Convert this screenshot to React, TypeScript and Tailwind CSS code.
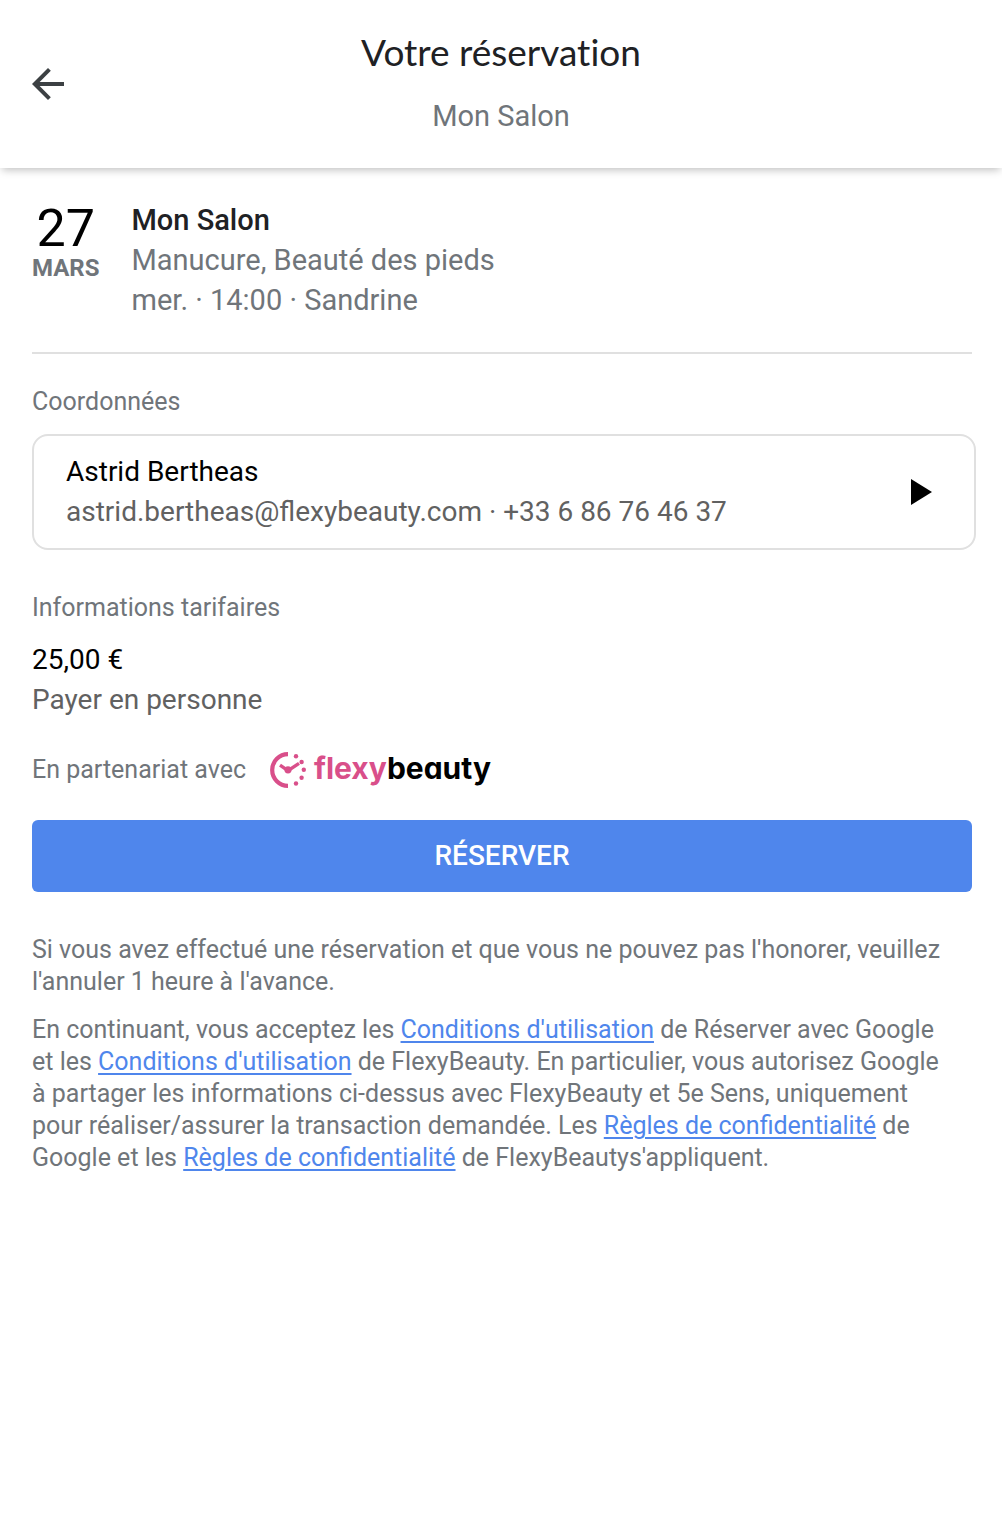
import React from 'react';

interface TextLinkProps {
  href: string;
  children: React.ReactNode;
}

const TextLink = ({ href, children }: TextLinkProps) => (
  <a href={href} className="text-[#4f86ec] underline decoration-2 underline-offset-3">
    {children}
  </a>
);

const FlexyBeautyLogo = () => (
  <div className="flex items-center gap-2">
    <svg width="36" height="36" viewBox="0 0 36 36" fill="none" aria-hidden="true">
      <path d="M18 2.2A15.8 15.8 0 0 0 18 33.8" stroke="#d94f8a" strokeWidth="4.2" />
      <path d="M10 13.2l8 5.4L29 11.4" stroke="#d94f8a" strokeWidth="3.4" />
      <circle cx="18" cy="17.8" r="3.6" fill="#d94f8a" />
      <circle cx="26" cy="4.2" r="2.2" fill="#d94f8a" />
      <circle cx="31.6" cy="10" r="2.2" fill="#d94f8a" />
      <circle cx="33.8" cy="17.8" r="2.2" fill="#d94f8a" />
      <circle cx="31.6" cy="25.8" r="2.2" fill="#d94f8a" />
      <circle cx="26" cy="31.5" r="2.2" fill="#d94f8a" />
    </svg>
    <span className="pb-1 font-['Inter',sans-serif] text-[30px] leading-8 font-bold text-black [font-feature-settings:'cv11']">
      <span className="text-[#d94f8a]">flexy</span>beauty
    </span>
  </div>
);

const App = () => {
  return (
    <div className="min-h-screen bg-white font-['Roboto',sans-serif] text-[#70757a]">
      <header className="flex h-[168px] items-center px-8 shadow-[0_4px_8px_-2px_rgba(0,0,0,0.25)]">
        <button type="button" aria-label="Retour" className="w-8 text-[#3c4043]">
          <svg width="32" height="32" viewBox="0 0 32 32" fill="currentColor">
            <path d="M32 14H7.66L18.84 2.82 16 0 0 16l16 16 2.82-2.82L7.66 18H32z" />
          </svg>
        </button>
        <div className="flex-1 pr-8 text-center">
          <h1 className="font-['Lato',sans-serif] text-[37px] leading-10 text-[#202124] [font-variant-ligatures:none]">Votre réservation</h1>
          <p className="mt-6 text-[29px] leading-10">Mon Salon</p>
        </div>
      </header>

      <main className="pr-[30px] pl-8">
        <section className="flex gap-8 border-b-2 border-[#e0e0e0] py-8">
          <div className="text-center">
            <div className="text-[52px] leading-[58px] text-black">27</div>
            <div className="text-2xl leading-5 font-bold">MARS</div>
          </div>
          <div className="text-[29px] leading-10">
            <h2 className="font-medium text-[#202124]">Mon Salon</h2>
            <p>Manucure, Beauté des pieds</p>
            <p>mer. · 14:00 · Sandrine</p>
          </div>
        </section>

        <section className="-mr-1 pt-8">
          <h3 className="text-[25px] leading-8">Coordonnées</h3>
          <button
            type="button"
            className="mt-4 flex w-full items-center justify-between rounded-2xl border-2 border-[#e0e0e0] py-4 pr-[42px] pl-8 text-left text-[28px] leading-10"
          >
            <span>
              <span className="block text-black">Astrid Bertheas</span>
              <span className="block text-[#616161]">astrid.bertheas@flexybeauty.com · +33 6 86 76 46 37</span>
            </span>
            <svg width="21" height="26" viewBox="0 0 21 26" aria-hidden="true">
              <path d="M0 0v26l21-13z" />
            </svg>
          </button>
        </section>

        <section className="pt-[42px]">
          <h3 className="text-[25px] leading-8">Informations tarifaires</h3>
          <p className="mt-4 text-[28px] leading-10 text-black">25,00 €</p>
          <p className="text-[28px] leading-10 text-[#616161]">Payer en personne</p>
        </section>

        <div className="mt-8 flex items-center gap-6 text-[25px] leading-8">
          <span>En partenariat avec</span>
          <FlexyBeautyLogo />
        </div>

        <button type="button" className="mt-8 h-[72px] w-full rounded-md bg-[#4f86ec] text-[28px] font-medium text-white">
          RÉSERVER
        </button>

        <div className="mt-[42px] space-y-4 pr-5 text-[25px] leading-8">
          <p>Si vous avez effectué une réservation et que vous ne pouvez pas l'honorer, veuillez l'annuler 1 heure à l'avance.</p>
          <p>
            En continuant, vous acceptez les <TextLink href="#conditions-google">Conditions d'utilisation</TextLink> de Réserver avec Google et les{' '}
            <TextLink href="#conditions-flexybeauty">Conditions d'utilisation</TextLink> de FlexyBeauty. En particulier, vous autorisez Google à partager les
            informations ci-dessus avec FlexyBeauty et 5e Sens, uniquement pour réaliser/assurer la transaction demandée. Les{' '}
            <TextLink href="#confidentialite-google">Règles de confidentialité</TextLink> de Google et les{' '}
            <TextLink href="#confidentialite-flexybeauty">Règles de confidentialité</TextLink> de FlexyBeautys'appliquent.
          </p>
        </div>
      </main>
    </div>
  );
};

export default App;
